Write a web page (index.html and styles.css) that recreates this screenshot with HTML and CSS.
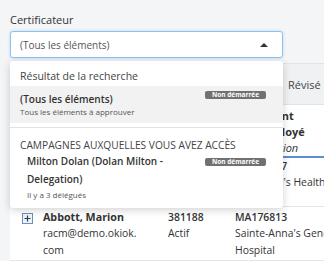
FILE: index.html
```html
<!DOCTYPE html>
<html lang="fr">
<head>
    <meta charset="UTF-8">
    <meta name="viewport" content="width=device-width, initial-scale=1.0">
    <title>Certificateur</title>
    <link rel="stylesheet" href="styles.css">
</head>
<body>
    <div class="page">
        <div class="field">
            <label class="field-label">Certificateur</label>
            <div class="select">
                <span>(Tous les éléments)</span>
                <span class="caret"></span>
            </div>

            <div class="dropdown">
                <div class="group-title">Résultat de la recherche</div>
                <div class="option active">
                    <div class="option-text">
                        <div class="option-name">(Tous les éléments)</div>
                        <div class="option-sub">Tous les éléments à approuver</div>
                    </div>
                    <span class="badge">Non démarrée</span>
                </div>
                <div class="divider"></div>
                <div class="group-title caps">Campagnes auxquelles vous avez accès</div>
                <div class="option nested">
                    <div class="option-text">
                        <div class="option-name">Milton Dolan (Dolan Milton - Delegation)</div>
                        <div class="option-sub">Il y a 3 délégués</div>
                    </div>
                    <span class="badge">Non démarrée</span>
                </div>
            </div>
        </div>

        <div class="card">
            <div class="tabs">
                <span class="tab">Tous</span>
                <span class="tab">À réviser</span>
                <span class="tab">Révisé</span>
            </div>
            <div class="table">
                <div class="row head">
                    <div class="cell"></div>
                    <div class="cell"><b>Nom</b><i>Courriel</i></div>
                    <div class="cell"><b>Matricule</b><i>Statut</i></div>
                    <div class="cell sorted"><b>Identifiant</b><b>de l'employé</b><i>Organisation</i></div>
                </div>
                <div class="row first">
                    <div class="cell"></div>
                    <div class="cell"><b>Adams, Paul</b><span>padams@demo.<wbr>okiok.com</span></div>
                    <div class="cell"><b class="num">380417</b><span>Actif</span></div>
                    <div class="cell"><b class="num">MA176107</b><span>Saint-Paul's Health</span></div>
                </div>
                <div class="row">
                    <div class="cell">
                        <svg class="expand" width="11" height="11" viewBox="0 0 11 11">
                            <rect x="0.5" y="0.5" width="10" height="10" fill="#eef3fa" stroke="#6d8fbf"/>
                            <path d="M5.5 2.5v6M2.5 5.5h6" stroke="#2f3b4c" stroke-width="1.2"/>
                        </svg>
                    </div>
                    <div class="cell"><b class="name">Abbott, Marion</b><span>racm@demo.okiok.<wbr>com</span></div>
                    <div class="cell"><b class="num">381188</b><span>Actif</span></div>
                    <div class="cell"><b class="num">MA176813</b><span>Sainte-Anna's General Hospital</span></div>
                </div>
            </div>
        </div>
    </div>
</body>
</html>
```

FILE: styles.css
```css
body {
    margin: 0;
    background-color: #f4f5f7;
    font-family: 'Open Sans', 'Liberation Sans', sans-serif;
    color: #333;
    overflow: hidden;
}
.page {
    padding-left: 10px;
}
.field {
    position: relative;
    padding-top: 13px;
    width: 273px;
}
.field-label {
    display: block;
    font-size: 11px;
    line-height: 14px;
    color: #333;
}
.select {
    margin-top: 4px;
    height: 27px;
    box-sizing: border-box;
    border: 1px solid #8cc3f4;
    border-radius: 3px;
    background: white;
    box-shadow: 0 0 3px rgba(66, 150, 230, 0.35);
    display: flex;
    align-items: center;
    justify-content: space-between;
    padding: 0 14px 0 9px;
    font-size: 10px;
    color: #555;
}
.caret {
    width: 0;
    height: 0;
    border-left: 4px solid transparent;
    border-right: 4px solid transparent;
    border-bottom: 4px solid #333;
}
.dropdown {
    position: absolute;
    top: 61px;
    left: 0;
    width: 273px;
    background: white;
    border-radius: 3px;
    box-shadow: 0 2px 8px rgba(0, 0, 0, 0.18);
    z-index: 2;
    padding-bottom: 7px;
}
.group-title {
    padding: 8px 10px 3px;
    font-size: 10.5px;
    line-height: 14px;
    color: #444;
}
.group-title.caps {
    text-transform: uppercase;
    padding: 10px 10px 0;
    font-size: 10.2px;
}
.divider {
    margin-top: 4px;
    border-top: 1px solid #e2e2e2;
}
.option {
    display: flex;
    align-items: flex-start;
    justify-content: space-between;
    padding: 5px 17px 6px 10px;
}
.option.active {
    background-color: #f2f2f2;
}
.option.nested {
    padding: 0 17px 0 17px;
}
.option-text {
    width: 175px;
}
.option-name {
    font-size: 10px;
    line-height: 16px;
    font-weight: 600;
    color: #333;
}
.nested .option-name {
    line-height: 18px;
}
.option-sub {
    font-size: 8px;
    line-height: 10px;
    color: #555;
}
.nested .option-sub {
    line-height: 13px;
}
.badge {
    width: 61px;
    text-align: center;
    background-color: #717171;
    color: white;
    font-size: 6.5px;
    font-weight: 700;
    line-height: 8px;
    border-radius: 2px;
}
.nested .badge {
    margin-top: 6px;
}
.card {
    margin-top: 5px;
    width: 430px;
    background: white;
}
.tabs {
    display: grid;
    grid-template-columns: 130px 140px auto;
    align-items: center;
    height: 40px;
    border-top: 1px solid #e1e3e6;
    border-bottom: 1px solid #e1e3e6;
    background-color: #f0f1f3;
    font-size: 11px;
    color: #444;
}
.tab {
    padding-left: 8px;
}
.row {
    display: grid;
    grid-template-columns: 33px 125px 67px 120px 85px;
    border-bottom: 1px solid #e3e5e8;
    font-size: 10.4px;
    line-height: 16.5px;
}
.row.head {
    border-bottom: none;
    line-height: 16px;
    font-size: 11px;
}
.row.head .cell {
    padding-top: 3px;
    padding-bottom: 0;
    border-bottom: 1px solid #e3e5e8;
}
.row.head .cell.sorted {
    border-bottom: 2px solid #5b8fd0;
}
.cell {
    display: flex;
    flex-direction: column;
    padding-top: 2px;
    padding-bottom: 2px;
}
.row.first {
    line-height: 15.5px;
}
.row.first .cell {
    padding-top: 1px;
    padding-bottom: 0;
}
.cell b {
    font-weight: 700;
}
.cell b.num {
    font-weight: 600;
}
.cell b.name {
    font-size: 10.7px;
    white-space: nowrap;
}
.cell i {
    font-style: italic;
}
.cell:nth-child(2) {
    padding-right: 38px;
}
.expand {
    margin: 4px 0 0 12px;
}
```
